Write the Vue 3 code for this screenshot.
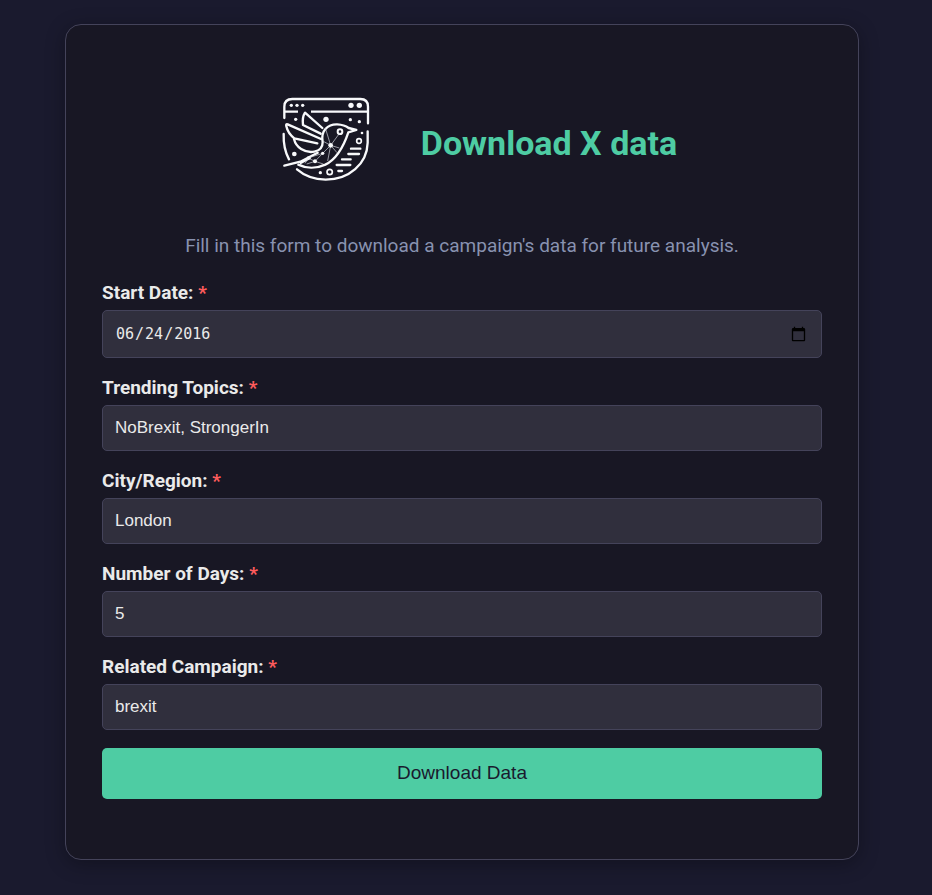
<script setup>
import { ref } from 'vue'

const fields = ref([
  { id: 'start-date', label: 'Start Date:', type: 'date', value: '2016-06-24' },
  { id: 'topics', label: 'Trending Topics:', type: 'text', value: 'NoBrexit, StrongerIn' },
  { id: 'region', label: 'City/Region:', type: 'text', value: 'London' },
  { id: 'days', label: 'Number of Days:', type: 'number', value: '5' },
  { id: 'campaign', label: 'Related Campaign:', type: 'text', value: 'brexit' }
])
</script>

<template>
  <main class="page">
    <section class="card">
      <header class="heading">
        <svg class="logo" viewBox="0 0 300 288" aria-hidden="true">
          <g fill="none" stroke="#f8f9fb" stroke-width="7" stroke-linecap="round" stroke-linejoin="round">
            <path d="M28 84V50Q28 27 52 27H256Q279 27 279 50V100" />
            <path d="M29 65H69M108 65H278" stroke-linecap="butt" />
            <path d="M26 132C25 161 29 184 42 208" />
            <path d="M278 124V158C276 222 222 269 152 269C119 268 88 257 66 238" />
            <path d="M142 114L90 68Q81 82 84 105L137 131" />
            <path d="M138 147L38 103Q32 101 34 109Q39 131 58 145L127 160" />
            <path d="M57 147C63 172 88 190 118 185C134 182 143 174 143 157C136 121 159 102 187 103C205 104 217 111 221 114L244 120L220 127C207 166 189 205 151 224C123 237 92 235 70 224" />
            <path d="M28 227L76 215L128 188" />
            <path d="M77 219L105 204" stroke-width="6" />
            <circle cx="195" cy="125" r="7" stroke-width="6" />
            <circle cx="252" cy="153" r="7" stroke-width="5" />
            <circle cx="164" cy="246" r="8" stroke-width="5" />
            <path d="M228 176H256M220 192H252M201 208H227M185 225H226M190 243H201" />
          </g>
          <g fill="none" stroke="#d7d8df" stroke-width="2">
            <path d="M195 128L167 166L143 190L120 214L99 204L143 190M167 166L151 114M167 166L145 154M167 166L193 174M167 166L158 213M167 166L186 188M120 214L95 222M120 214L145 222M101 204L90 220" />
          </g>
          <g fill="#f8f9fb">
            <circle cx="49" cy="46" r="5" />
            <circle cx="66" cy="46" r="5" />
            <circle cx="83" cy="46" r="5" />
            <circle cx="228" cy="46" r="8" />
            <circle cx="253" cy="46" r="8" />
            <circle cx="62" cy="88" r="5" />
            <circle cx="153" cy="88" r="8" />
            <circle cx="226" cy="89" r="5" />
            <circle cx="253" cy="95" r="5" />
            <circle cx="261" cy="129" r="4" />
            <circle cx="58" cy="192" r="7" />
            <circle cx="136" cy="248" r="5" />
            <circle cx="167" cy="166" r="7" />
            <circle cx="143" cy="190" r="5" />
            <circle cx="120" cy="214" r="6" />
            <circle cx="100" cy="204" r="5" />
          </g>
        </svg>
        <h1>Download X data</h1>
      </header>

      <p class="intro">Fill in this form to download a campaign's data for future analysis.</p>

      <form class="form" @submit.prevent>
        <div v-for="field in fields" :key="field.id" class="field">
          <label :for="field.id">{{ field.label }} <span class="required">*</span></label>
          <input :id="field.id" v-model="field.value" :type="field.type" required />
        </div>
        <button type="submit">Download Data</button>
      </form>
    </section>
  </main>
</template>

<style>
body {
  background: #1a1a2e;
}
</style>

<style scoped>
.page {
  box-sizing: border-box;
  min-height: 100vh;
  padding: 24px 73px 35px 65px;
  font-family: Roboto, sans-serif;
}

.card {
  box-sizing: border-box;
  padding: 65px 36px 60px;
  border: 1px solid #44435a;
  border-radius: 16px;
  background: #181724;
  box-shadow: 0 4px 20px rgba(0, 0, 0, 0.3);
}

.heading {
  display: flex;
  align-items: center;
  justify-content: center;
  gap: 46px;
  padding-left: 28px;
}

.logo {
  flex: none;
  width: 100px;
  height: 96px;
}

h1 {
  margin: 0;
  padding-top: 10px;
  color: #4ecca3;
  font-size: 34px;
  line-height: 40px;
}

.intro {
  margin: 48px 0 24px;
  color: #8892b0;
  font-size: 19px;
  line-height: 23px;
  text-align: center;
}

.form {
  display: flex;
  flex-direction: column;
  gap: 18px;
}

.field {
  display: flex;
  flex-direction: column;
  gap: 6px;
}

label {
  color: #eaeaea;
  font-size: 19px;
  font-weight: 700;
  line-height: 23px;
}

.required {
  color: #ff5c5c;
}

input {
  box-sizing: border-box;
  width: 100%;
  height: 46px;
  padding: 12px;
  border: 1px solid #44435a;
  border-radius: 5px;
  outline: none;
  background: #302f3d;
  color: #eaeaea;
  font-family: "Liberation Sans", Arial, sans-serif;
  font-size: 17px;
}

input[type="date"] {
  height: 48px;
  font-family: "DejaVu Sans Mono", monospace;
  font-size: 15px;
}

input[type="date"]::-webkit-calendar-picker-indicator {
  width: 17px;
  height: 17px;
}

input[type="number"] {
  appearance: textfield;
}

button {
  height: 51px;
  padding: 0 12px 2px;
  border: 0;
  border-radius: 5px;
  background: #4ecca3;
  color: #1a1a2e;
  font-family: "Liberation Sans", Arial, sans-serif;
  font-size: 19px;
  cursor: pointer;
}
</style>
